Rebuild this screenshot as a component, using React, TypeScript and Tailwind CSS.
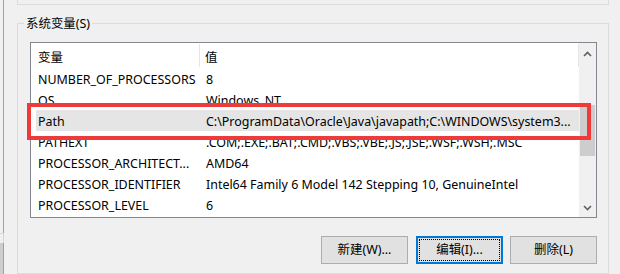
import React from 'react';

const rows = [
  { name: 'NUMBER_OF_PROCESSORS', value: '8' },
  { name: 'OS', value: 'Windows_NT' },
  { name: 'Path', value: 'C:\\ProgramData\\Oracle\\Java\\javapath;C:\\WINDOWS\\system3...', selected: true },
  { name: 'PATHEXT', value: '.COM;.EXE;.BAT;.CMD;.VBS;.VBE;.JS;.JSE;.WSF;.WSH;.MSC' },
  { name: 'PROCESSOR_ARCHITECT...', value: 'AMD64' },
  { name: 'PROCESSOR_IDENTIFIER', value: 'Intel64 Family 6 Model 142 Stepping 10, GenuineIntel' },
  { name: 'PROCESSOR_LEVEL', value: '6' },
];

function Chevron({ up }: { up?: boolean }) {
  return (
    <svg width="9" height="6" viewBox="0 0 9 6" className="block">
      <path
        d={up ? 'M1 5 L4.5 1.5 L8 5' : 'M1 1 L4.5 4.5 L8 1'}
        fill="none"
        stroke="#606060"
        strokeWidth="1.6"
      />
    </svg>
  );
}

function Button({ label, focused }: { label: string; focused?: boolean }) {
  if (focused) {
    return (
      <button className="w-[87px] h-[28px] border-2 border-[#0078d7] bg-[#e1e1e1] p-[1px]">
        <span className="flex h-full w-full items-center justify-center border border-dotted border-black">
          {label}
        </span>
      </button>
    );
  }
  return (
    <button className="w-[87px] h-[28px] border border-[#adadad] bg-[#e1e1e1] flex items-center justify-center">
      {label}
    </button>
  );
}

export default function App() {
  return (
    <div className="relative flex w-[620px] h-[274px] overflow-hidden bg-[#f0f0f0] text-[12.45px] leading-[16px] text-black font-['Noto_Sans','Noto_Sans_CJK_SC',sans-serif]">
      {/* edge of the parent window */}
      <div className="flex w-[4px] shrink-0 flex-col">
        <div className="h-[233px] border-r border-[#a0a0a0]" />
        <div className="h-[10px] border-t border-r border-[#d6d6d6]" />
        <div className="flex-1 bg-[#cdcdcd] border-r border-[#a0a0a0]" />
      </div>

      <div className="ml-[13px] flex w-[592px] shrink-0 flex-col">
        <div className="h-[6px] border-x border-b border-[#dcdcdc]" />

        {/* 系统变量 group box */}
        <div className="mt-[18px] flex h-[300px] flex-col border border-[#dcdcdc] pl-[6px] pr-[11px]">
          <div className="-mt-[8px] w-fit bg-[#f0f0f0] px-[2px]">系统变量(S)</div>

          <div className="ml-[6px] mt-[10px] flex h-[176px] border border-[#828790] bg-white">
            <div className="flex flex-1 flex-col overflow-hidden">
              <div className="flex h-[25px] shrink-0">
                <div className="my-[1px] flex w-[169px] items-center border-r border-[#e5e5e5] pl-[7px] pt-[4px]">变量</div>
                <div className="my-[1px] flex flex-1 items-center border-r border-[#e5e5e5] pl-[5px] pt-[4px]">值</div>
              </div>
              {rows.map((row) => (
                <div
                  key={row.name}
                  className={`ml-[5px] flex h-[21px] shrink-0 items-center whitespace-nowrap pt-[3px] ${row.selected ? 'bg-[#e5e5e5]' : ''}`}
                >
                  <div className="w-[164px] overflow-hidden pl-[2px]">{row.name}</div>
                  <div className="flex-1 overflow-hidden pl-[6px]">{row.value}</div>
                </div>
              ))}
            </div>

            <div className="flex w-[17px] shrink-0 flex-col bg-[#f0f0f0]">
              <div className="flex h-[17px] items-center justify-center pt-[4px]">
                <Chevron up />
              </div>
              <div className="ml-[1px] mt-[45px] h-[51px] w-[15px] bg-[#cdcdcd]" />
              <div className="flex-1" />
              <div className="flex h-[17px] items-center justify-center pb-[2px]">
                <Chevron />
              </div>
            </div>
          </div>

          <div className="mt-[18px] flex justify-end">
            <Button label="新建(W)..." />
            <div className="w-[8px]" />
            <Button label="编辑(I)..." focused />
            <div className="w-[7px]" />
            <Button label="删除(L)" />
          </div>
        </div>
      </div>

      {/* red annotation box */}
      <div className="pointer-events-none absolute left-[27px] top-[103px] h-[37px] w-[564px] border-4 border-[#f03a3a]" />
    </div>
  );
}
